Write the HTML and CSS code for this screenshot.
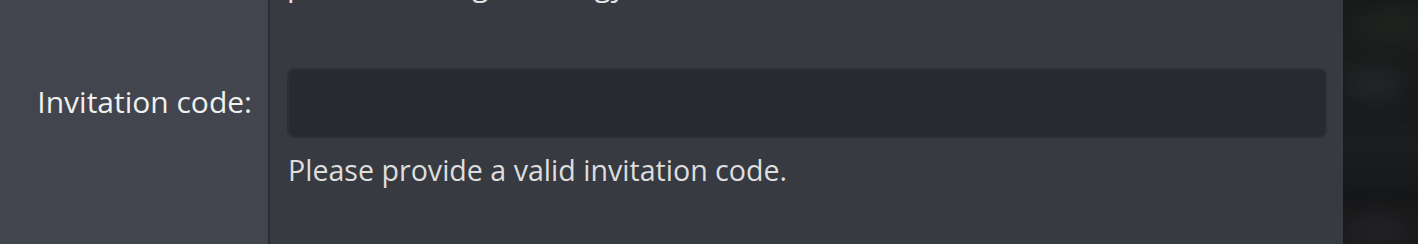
FILE: index.html
```html
<!DOCTYPE html>
<html>
<head>
<meta charset="utf-8">
<link rel="stylesheet" href="styles.css">
</head>
<body>
<div class="page">
  <div class="form">
    <div class="row intro-row">
      <div class="label-col"></div>
      <div class="field-col">
        <p class="intro">possible to log in energy</p>
      </div>
    </div>
    <div class="row field-row">
      <div class="label-col">
        <label class="label" for="code">Invitation code:</label>
      </div>
      <div class="field-col">
        <input id="code" class="input" type="text">
        <p class="help">Please provide a valid invitation code.</p>
      </div>
    </div>
  </div>
  <div class="backdrop">
    <div class="blob b1"></div>
    <div class="blob b2"></div>
    <div class="blob b3"></div>
  </div>
</div>
</body>
</html>
```

FILE: styles.css
```css
html, body {
  margin: 0;
  padding: 0;
  height: 100%;
  overflow: hidden;
}
body {
  font-family: "Open Sans", "Liberation Sans", sans-serif;
  background: #161719;
}
.page {
  display: flex;
  height: 244px;
}
.form {
  width: 1343px;
  flex: none;
  display: flex;
  flex-direction: column;
  background: #383a42;
}
.row {
  display: flex;
}
.label-col {
  width: 270px;
  flex: none;
  box-sizing: border-box;
  background: #42454d;
  border-right: 2px solid #2b2d32;
  display: flex;
  justify-content: flex-end;
  padding-right: 16px;
}
.field-col {
  flex: 1;
  min-width: 0;
  padding: 0 16px 0 17px;
}
.intro-row {
  height: 68px;
}
.intro {
  margin: -35px 0 0 0;
  font-size: 30px;
  line-height: 40px;
  color: #e4e4e4;
  white-space: nowrap;
  overflow: hidden;
}
.field-row {
  flex: 1;
}
.field-row .label-col {
  align-items: flex-start;
}
.label {
  margin-top: 14px;
  font-size: 30px;
  line-height: 40px;
  color: #f0f0f0;
}
.input {
  display: block;
  width: 100%;
  height: 70px;
  box-sizing: border-box;
  margin: 0;
  background: #282a2f;
  border: 2px solid #2e3035;
  border-radius: 8px;
  outline: none;
}
.help {
  margin: 12px 0 0 1px;
  font-size: 28.6px;
  line-height: 40px;
  color: #dedede;
}
.backdrop {
  flex: 1;
  position: relative;
  overflow: hidden;
  background: linear-gradient(180deg, #17191a 0%, #1b1d1c 20%, #18191b 40%, #1c1d1f 60%, #161718 80%, #1a1a1c 100%);
}
.blob {
  position: absolute;
  border-radius: 50%;
  filter: blur(12px);
}
.b1 { left: 10px; top: 10px; width: 80px; height: 30px; background: #1f2520; }
.b2 { left: 0; top: 70px; width: 60px; height: 30px; background: #25272a; }
.b3 { left: 0; top: 215px; width: 70px; height: 30px; background: #222325; }
```
